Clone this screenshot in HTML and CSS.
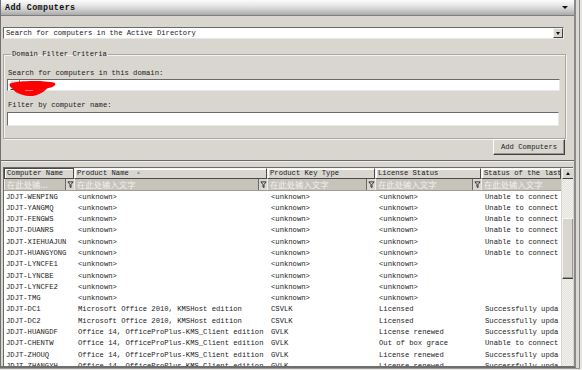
FILE: index.html
```html
<!DOCTYPE html>
<html>
<head>
<meta charset="utf-8">
<link rel="stylesheet" href="styles.css">
</head>
<body>
<div class="frame">
  <div class="window">
    <div class="titlebar">
      <span class="title">Add Computers</span>
      <span class="tb-arrow"></span>
    </div>
    <div class="content">
      <div class="combo scope">
        <span class="combo-text">Search for computers in the Active Directory</span>
        <span class="combo-btn"><span class="tri-down"></span></span>
      </div>
      <fieldset class="group">
        <legend>Domain Filter Criteria</legend>
        <div class="lbl first">Search for computers in this domain:</div>
        <div class="combo domain">
          <svg class="scribble" width="48" height="18" viewBox="0 0 48 18">
            <path d="M1 3.5 C8 0.5 34 0 45 2.5 C48 4 46 7 38 8.5 C34 13 27 16.5 20 16 C12 15.5 5 12 3 8 C0.5 6.5 0 5 1 3.5 Z" fill="#f00"/>
            <path d="M16 10.5 H24" stroke="#ff7070" stroke-width="1"/>
          </svg>
          <span class="combo-btn"><span class="tri-down"></span></span>
        </div>
        <div class="lbl second">Filter by computer name:</div>
        <div class="textbox"></div>
      </fieldset>
      <div class="btn-row"><span class="btn">Add Computers</span></div>
    </div>
    <div class="sep"></div>
    <div class="grid-wrap">
      <div class="grid">
        <div class="row head">
          <div class="hc">Computer Name</div>
          <div class="hc">Product Name <span class="sort">&#9650;</span></div>
          <div class="hc">Product Key Type</div>
          <div class="hc">License Status</div>
          <div class="hc last">Status of the last</div>
        </div>
        <div class="row filter">
          <div class="fc"><span class="ph">在此处输...</span><svg class="funnel" width="8" height="9" viewBox="0 0 8 9"><path d="M1 1.5 H7 L4.6 4.5 V8 L3.4 7.3 V4.5 Z" fill="none" stroke="#222" stroke-width="1"/></svg></div>
          <div class="fc"><span class="ph">在此处输入文字</span><svg class="funnel" width="8" height="9" viewBox="0 0 8 9"><path d="M1 1.5 H7 L4.6 4.5 V8 L3.4 7.3 V4.5 Z" fill="none" stroke="#222" stroke-width="1"/></svg></div>
          <div class="fc"><span class="ph">在此处输入文字</span><svg class="funnel" width="8" height="9" viewBox="0 0 8 9"><path d="M1 1.5 H7 L4.6 4.5 V8 L3.4 7.3 V4.5 Z" fill="none" stroke="#222" stroke-width="1"/></svg></div>
          <div class="fc"><span class="ph">在此处输入文字</span><svg class="funnel" width="8" height="9" viewBox="0 0 8 9"><path d="M1 1.5 H7 L4.6 4.5 V8 L3.4 7.3 V4.5 Z" fill="none" stroke="#222" stroke-width="1"/></svg></div>
          <div class="fc last"><span class="ph">在此处输入文字</span></div>
        </div>
        <div class="rows">
          <div class="row"><div>JDJT-WENPING</div><div>&lt;unknown&gt;</div><div>&lt;unknown&gt;</div><div>&lt;unknown&gt;</div><div>Unable to connect</div></div>
          <div class="row"><div>JDJT-YANGMQ</div><div>&lt;unknown&gt;</div><div>&lt;unknown&gt;</div><div>&lt;unknown&gt;</div><div>Unable to connect</div></div>
          <div class="row"><div>JDJT-FENGWS</div><div>&lt;unknown&gt;</div><div>&lt;unknown&gt;</div><div>&lt;unknown&gt;</div><div>Unable to connect</div></div>
          <div class="row"><div>JDJT-DUANRS</div><div>&lt;unknown&gt;</div><div>&lt;unknown&gt;</div><div>&lt;unknown&gt;</div><div>Unable to connect</div></div>
          <div class="row"><div>JDJT-XIEHUAJUN</div><div>&lt;unknown&gt;</div><div>&lt;unknown&gt;</div><div>&lt;unknown&gt;</div><div>Unable to connect</div></div>
          <div class="row"><div>JDJT-HUANGYONG</div><div>&lt;unknown&gt;</div><div>&lt;unknown&gt;</div><div>&lt;unknown&gt;</div><div>Unable to connect</div></div>
          <div class="row"><div>JDJT-LYNCFE1</div><div>&lt;unknown&gt;</div><div>&lt;unknown&gt;</div><div>&lt;unknown&gt;</div><div></div></div>
          <div class="row"><div>JDJT-LYNCBE</div><div>&lt;unknown&gt;</div><div>&lt;unknown&gt;</div><div>&lt;unknown&gt;</div><div></div></div>
          <div class="row"><div>JDJT-LYNCFE2</div><div>&lt;unknown&gt;</div><div>&lt;unknown&gt;</div><div>&lt;unknown&gt;</div><div></div></div>
          <div class="row"><div>JDJT-TMG</div><div>&lt;unknown&gt;</div><div>&lt;unknown&gt;</div><div>&lt;unknown&gt;</div><div></div></div>
          <div class="row"><div>JDJT-DC1</div><div>Microsoft Office 2010, KMSHost edition</div><div>CSVLK</div><div>Licensed</div><div>Successfully upda</div></div>
          <div class="row"><div>JDJT-DC2</div><div>Microsoft Office 2010, KMSHost edition</div><div>CSVLK</div><div>Licensed</div><div>Successfully upda</div></div>
          <div class="row"><div>JDJT-HUANGDF</div><div>Office 14, OfficeProPlus-KMS_Client edition</div><div>GVLK</div><div>License renewed</div><div>Successfully upda</div></div>
          <div class="row"><div>JDJT-CHENTW</div><div>Office 14, OfficeProPlus-KMS_Client edition</div><div>GVLK</div><div>Out of box grace</div><div>Unable to connect</div></div>
          <div class="row"><div>JDJT-ZHOUQ</div><div>Office 14, OfficeProPlus-KMS_Client edition</div><div>GVLK</div><div>License renewed</div><div>Successfully upda</div></div>
          <div class="row"><div>JDJT-ZHANGYH</div><div>Office 14, OfficeProPlus-KMS_Client edition</div><div>GVLK</div><div>License renewed</div><div>Successfully upda</div></div>
        </div>
      </div>
      <div class="vscroll">
        <div class="sb-up"><span class="tri-up"></span></div>
        <div class="sb-track">
          <div class="sb-thumb"></div>
        </div>
      </div>
    </div>
  </div>
</div>
</body>
</html>
```

FILE: styles.css
```css
* { box-sizing: border-box; }
html, body {
  margin: 0;
  padding: 0;
  width: 582px;
  height: 370px;
  overflow: hidden;
  background: #e6e5e1;
  font-family: "Liberation Mono", "DejaVu Sans Mono", monospace;
  font-size: 7.2px;
  color: #1a1a1a;
}
.frame {
  width: 580px;
  height: 369px;
  border-right: 1px solid #8a8a8a;
  border-bottom: 1px solid #9a9a9a;
  padding-right: 3px;
  background: #dcdad4;
}
.window {
  width: 576px;
  height: 368px;
  background: #d8d6cf;
  border-left: 1px solid #707070;
  border-right: 2px solid #8a8a8a;
  border-bottom: 2px solid #6e6e6e;
  display: flex;
  flex-direction: column;
}
.titlebar {
  height: 16px;
  flex: none;
  background: linear-gradient(#fbfbfb 0%, #e8e8e8 35%, #c4c4c4 75%, #a9a9a9 100%);
  border-bottom: 1px solid #7e7e7e;
  display: flex;
  align-items: center;
  justify-content: space-between;
  padding: 0 6px 0 4px;
}
.title {
  font-weight: bold;
  font-size: 8.4px;
  color: #111;
  letter-spacing: 0.4px;
}
.tb-arrow {
  width: 0; height: 0;
  border-left: 3px solid transparent;
  border-right: 3px solid transparent;
  border-top: 3px solid #111;
}
.content {
  flex: none;
  padding: 11px 0 0 2px;
  display: flex;
  flex-direction: column;
}
.combo {
  position: relative;
  height: 12px;
  background: #fff;
  border-top: 1px solid #6a6a6a;
  border-left: 1px solid #6a6a6a;
  border-bottom: 1px solid #e8e8e8;
  border-right: 1px solid #e8e8e8;
  display: flex;
  align-items: center;
  justify-content: space-between;
  padding-left: 2px;
}
.scope { width: 561px; }
.combo-btn {
  width: 10px;
  height: 10px;
  background: #d8d6cf;
  border-top: 1px solid #f4f4f4;
  border-left: 1px solid #f4f4f4;
  border-right: 1px solid #404040;
  border-bottom: 1px solid #404040;
  display: flex;
  align-items: center;
  justify-content: center;
}
.tri-down {
  width: 0; height: 0;
  border-left: 2.5px solid transparent;
  border-right: 2.5px solid transparent;
  border-top: 3px solid #111;
}
.group {
  margin: 11px 0 0 0;
  width: 563px;
  height: 89px;
  border: 1px solid #a9a7a1;
  box-shadow: inset 1px 1px 0 #f2f2f2, 1px 1px 0 #f2f2f2;
  padding: 0 5px 0 3px;
  display: flex;
  flex-direction: column;
}
.group legend {
  padding: 0 1px;
  margin-left: 4px;
  line-height: 9px;
  font-size: 7.2px;
}
.lbl {
  line-height: 9px;
  padding-left: 1px;
}
.lbl.first { margin-top: 10px; }
.lbl.second { margin-top: 10px; }
.domain { width: 553px; margin-top: 1px; }
.scribble {
  position: absolute;
  left: 1px;
  top: 0px;
}
.textbox {
  width: 552px;
  height: 14px;
  background: #fff;
  border-top: 1px solid #6a6a6a;
  border-left: 1px solid #6a6a6a;
  border-bottom: 1px solid #e8e8e8;
  border-right: 1px solid #e8e8e8;
  margin-top: 2px;
}
.btn-row {
  display: flex;
  justify-content: flex-end;
  padding-right: 9px;
  margin-top: 0px;
}
.btn {
  width: 72px;
  height: 16px;
  display: flex;
  align-items: center;
  justify-content: center;
  background: #d8d6cf;
  border-top: 1px solid #fafafa;
  border-left: 1px solid #fafafa;
  border-right: 1px solid #404040;
  border-bottom: 1px solid #404040;
  box-shadow: inset -1px -1px 0 #9a9890;
}
.sep {
  flex: none;
  margin-top: 5px;
  height: 1px;
  background: #6a6a6a;
  border-bottom: 1px solid #f0f0f0;
  box-sizing: content-box;
}
.grid-wrap {
  flex: 1;
  margin: 5px 0 0 2px;
  width: 570px;
  border-top: 1px solid #6a6a6a;
  border-left: 1px solid #6a6a6a;
  display: flex;
  overflow: hidden;
}
.grid {
  width: 557px;
  flex: none;
  display: flex;
  flex-direction: column;
  background: #fff;
  overflow: hidden;
}
.row {
  display: grid;
  grid-template-columns: 70px 193px 108px 106px 80px;
  height: 11.3px;
  line-height: 11.3px;
  white-space: nowrap;
}
.row > div {
  overflow: hidden;
  padding-left: 3px;
}
.rows .row > div:first-child { padding-left: 2px; }
.rows .row > div:nth-child(2),
.rows .row > div:nth-child(3),
.rows .row > div:nth-child(4) { padding-left: 4px; }
.rows .row > div:nth-child(5) { padding-left: 4px; }
.row.head {
  height: 11px;
  line-height: 9px;
  background: #d8d6cf;
}
.row.head .hc {
  border: 1px solid #4a4a4a;
  border-left-color: #f4f4f4;
  border-top-color: #f4f4f4;
  padding-left: 2px;
  box-shadow: inset 1px 1px 0 #fff;
}
.row.head .hc:first-child { border-left-color: #4a4a4a; border-top-color: #4a4a4a; }
.sort {
  color: #9a9890;
  font-size: 5px;
  vertical-align: 1px;
  margin-left: 4px;
}
.row.filter {
  height: 12px;
  line-height: 11px;
  background: #c6c3bb;
  border-bottom: 1px solid #a09d96;
}
.row.filter .fc {
  display: flex;
  align-items: center;
  justify-content: space-between;
  padding-left: 2px;
  padding-right: 0;
  border-left: 1px solid #eeede9;
}
.ph {
  font-family: "Noto Sans CJK SC", sans-serif;
  font-size: 8.4px;
  color: #f1f0ec;
  line-height: 11px;
}
.funnel {
  flex: none;
  border-left: 1px solid #6a6a6a;
  background: #d8d6cf;
  width: 9px;
  height: 11px;
  padding: 1px 0 1px 1px;
}
.rows {
  padding-top: 0.5px;
  background: #fff;
}
.vscroll {
  width: 13px;
  flex: none;
  display: flex;
  flex-direction: column;
  background: #ebe9e4;
  border-left: 1px solid #d8d6cf;
}
.sb-up {
  height: 11px;
  flex: none;
  background: #d8d6cf;
  border-top: 1px solid #f6f6f6;
  border-left: 1px solid #f6f6f6;
  border-right: 1px solid #404040;
  border-bottom: 1px solid #404040;
  display: flex;
  align-items: center;
  justify-content: center;
}
.tri-up {
  width: 0; height: 0;
  border-left: 2.5px solid transparent;
  border-right: 2.5px solid transparent;
  border-bottom: 3px solid #111;
}
.sb-track {
  flex: 1;
  padding-top: 39px;
  background: repeating-conic-gradient(#f3f2ef 0 25%, #e3e1dc 0 50%) 0 0 / 2px 2px;
}
.sb-thumb {
  height: 61px;
  background: #d8d6cf;
  border-top: 1px solid #f6f6f6;
  border-left: 1px solid #f6f6f6;
  border-right: 1px solid #404040;
  border-bottom: 1px solid #404040;
  box-shadow: inset -1px -1px 0 #9a9890;
}
```
